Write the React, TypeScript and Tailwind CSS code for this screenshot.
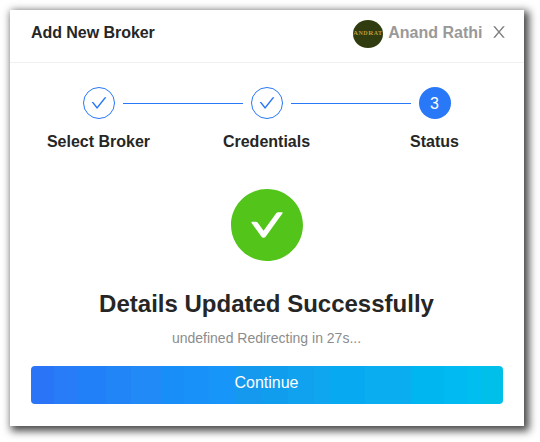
const CHECK =
  "M912 190h-69.9c-9.8 0-19.1 4.5-25.1 12.2L404.7 724.5 207 474a32 32 0 00-25.1-12.2H112c-6.7 0-10.4 7.7-6.3 12.9l273.9 347c12.8 16.2 37.4 16.2 50.3 0l488.4-618.9c4.1-5.1.4-12.8-6.3-12.8z";
const CLOSE =
  "M563.8 512l262.5-312.9c4.4-5.2.7-13.1-6.1-13.1h-79.8c-4.7 0-9.2 2.1-12.3 5.7L511.6 449.8 295.1 191.7c-3-3.6-7.5-5.7-12.3-5.7H203c-6.8 0-10.5 7.9-6.1 13.1L459.4 512 196.9 824.9A7.95 7.95 0 00203 838h79.8c4.7 0 9.2-2.1 12.3-5.7l216.5-258.1 216.5 258.1c3 3.6 7.5 5.7 12.3 5.7h79.8c6.8 0 10.5-7.9 6.1-13.1L563.8 512z";
const SUCCESS =
  "M512 64C264.6 64 64 264.6 64 512s200.6 448 448 448 448-200.6 448-448S759.4 64 512 64zm193.5 301.7l-210.6 292a31.8 31.8 0 01-51.7 0L318.5 484.9c-3.8-5.3 0-12.7 6.5-12.7h46.9c10.2 0 19.9 4.9 25.9 13.3l71.2 98.8 157.2-218c6-8.3 15.6-13.3 25.9-13.3H699c6.5 0 10.3 7.4 6.5 12.7z";

function Icon({ path, className }: { path: string; className: string }) {
  return (
    <svg viewBox="64 64 896 896" fill="currentColor" className={className} aria-hidden="true">
      <path d={path} />
    </svg>
  );
}

function StepCircle({ step, done }: { step: number; done: boolean }) {
  return done ? (
    <span className="flex size-8 shrink-0 items-center justify-center rounded-full border border-[#2878f8] text-[#2878f8]">
      <Icon path={CHECK} className="size-4" />
    </span>
  ) : (
    <span className="flex size-8 shrink-0 items-center justify-center rounded-full bg-[#2878f8] pt-px pr-px text-base text-white">
      {step}
    </span>
  );
}

const steps = ["Select Broker", "Credentials", "Status"];

export default function App() {
  return (
    <div className="h-[442px] w-[540px] overflow-hidden bg-white p-2.5 font-['Liberation_Sans',Arial,sans-serif] text-[#262626]">
      <section className="flex h-[416px] w-[514px] flex-col bg-white shadow-[3px_3px_8px_2px_rgba(0,0,0,0.72)]">
        <header className="flex h-[53px] shrink-0 items-start justify-between border-b border-[#f0f0f0] pr-[17px] pl-[21px]">
          <h1 className="mt-3 text-base leading-[22px] font-bold tracking-[-0.05px]">Add New Broker</h1>
          <div className="flex items-start">
            <div className="mt-2.5 flex h-7 w-[30px] items-center justify-center overflow-hidden rounded-[50%] bg-[#303c10]">
              <span className="shrink-0 pb-0.5 font-['Liberation_Serif',serif] text-[6px] leading-none font-bold tracking-[0.5px] whitespace-nowrap text-[#bd9a38]">
                <span className="text-[7px]">A</span>ND<span className="text-[7px]">R</span>AT
              </span>
            </div>
            <span className="mt-3 ml-[5.5px] text-base leading-[22px] font-bold text-[#999999]">Anand Rathi</span>
            <button aria-label="Close" className="mt-3.5 ml-[8.5px] text-[#808080]">
              <Icon path={CLOSE} className="block size-4" />
            </button>
          </div>
        </header>

        <ol className="mt-6 flex gap-2 pl-[73px]">
          {steps.map((label, i) => (
            <li key={label} className="flex w-40 shrink-0 flex-col last:w-8">
              <div className="flex items-center gap-2">
                <StepCircle step={i + 1} done={i < 2} />
                {i < 2 && <span className="mt-px h-px flex-1 bg-[#2878f8]" />}
              </div>
              <div className="mt-[11px] flex w-[31px] justify-center text-base leading-6 font-bold whitespace-nowrap">
                {label}
              </div>
            </li>
          ))}
        </ol>

        <main className="flex flex-col items-center px-[21px] pt-[35px]">
          <Icon path={SUCCESS} className="size-[72px] text-[#52c41a]" />
          <h2 className="mt-[27px] pr-px text-2xl leading-8 font-bold">Details Updated Successfully</h2>
          <p className="mt-[7px] pr-px text-sm leading-[22px] text-[#8c8c8c]">undefined Redirecting in 27s...</p>
          <button className="mt-[17px] h-[38px] w-full rounded-[4px] bg-[linear-gradient(90deg,#2a75f7_0_23px,#297cf7_23px_47px,#2180f8_47px_75px,#2285f7_75px_100px,#218af7_100px_130px,#188ff8_130px_153px,#1892f8_153px_178px,#1895f8_178px_204px,#1499ee_204px_230px,#109dee_230px_257px,#10a1ef_257px_283px,#0fa5ef_283px_298px,#07a9f0_298px_334px,#0aaef0_334px_380px,#00b6f0_380px_413px,#00baf1_413px_437px,#00bff0_437px_450px,#00bfe8_450px)] pr-px pb-[5px] text-base leading-6 text-white">
            Continue
          </button>
        </main>
      </section>
    </div>
  );
}
